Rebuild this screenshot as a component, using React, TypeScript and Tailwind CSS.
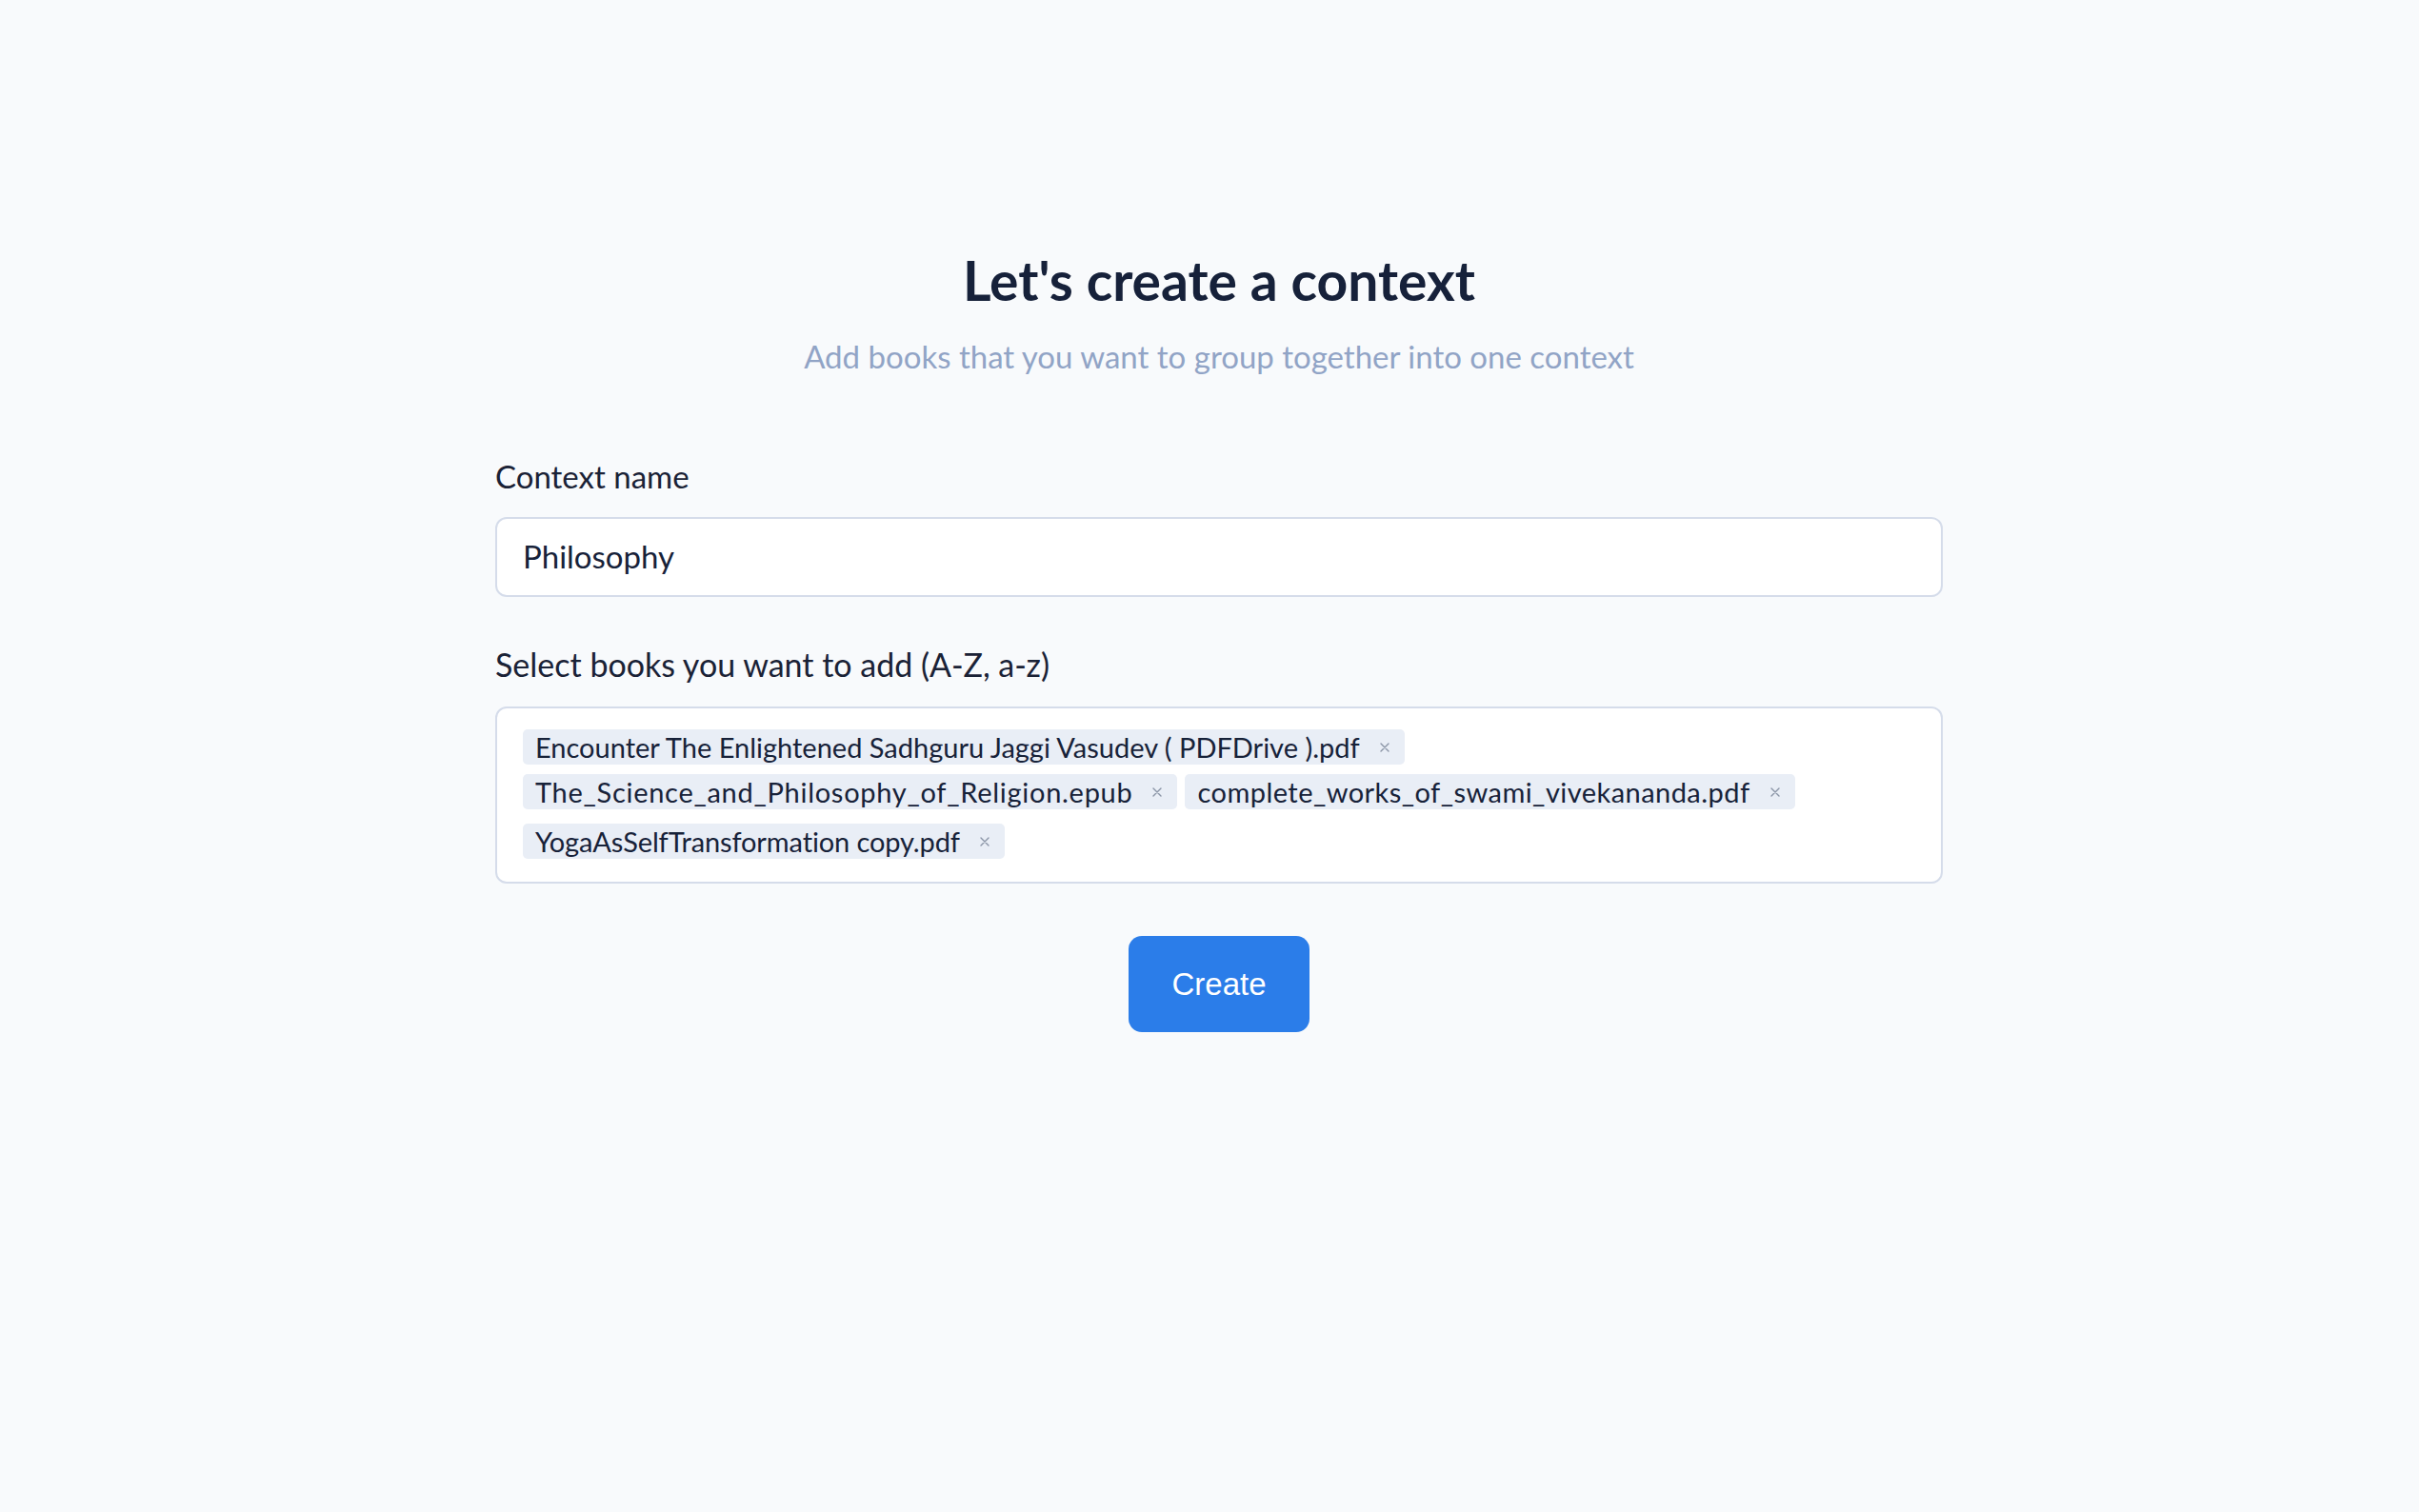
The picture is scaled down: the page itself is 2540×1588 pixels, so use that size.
import React from "react";

const tags = [
  { t: "Encounter The Enlightened Sadhguru Jaggi Vasudev ( PDFDrive ).pdf", c: "tracking-[0px]" },
  { t: "The_Science_and_Philosophy_of_Religion.epub", c: "tracking-[0.72px]" },
  { t: "complete_works_of_swami_vivekananda.pdf", c: "tracking-[0.45px]" },
  { t: "YogaAsSelfTransformation copy.pdf", c: "tracking-[-0.12px]" },
];

function XIcon() {
  return (
    <svg width="12" height="12" viewBox="0 0 12 12" fill="none">
      <path d="M2 2L10 10M10 2L2 10" stroke="#8b95a7" strokeWidth="1.4" strokeLinecap="round" />
    </svg>
  );
}

export default function App() {
  return (
    <div
      className="min-h-[1588px] w-full bg-[#f8fafc] text-[#172239] pl-[20px]"
      style={{ fontFamily: "Lato, 'Noto Sans', sans-serif" }}
    >
      <div className="mx-auto flex w-[1520px] flex-col pt-[260px]">
        <h1 className="text-center text-[57px] font-bold leading-[68px] text-[#16213a]">
          Let's create a context
        </h1>
        <p className="mt-[24px] text-center text-[33px] leading-[44px] text-[#91a4c6]">
          Add books that you want to group together into one context
        </p>

        <label className="mt-[84px] text-[33px] leading-[40px] text-[#1a2236]">Context name</label>
        <div className="mt-[23px] flex h-[84px] items-center rounded-[12px] border-2 border-[#d5dcea] bg-white px-[27px]">
          <span className="text-[33px] text-[#172239]">Philosophy</span>
        </div>

        <label className="mt-[51px] text-[34px] leading-[40px] text-[#1a2236]">
          Select books you want to add (A-Z, a-z)
        </label>
        <div className="mt-[24px] h-[186px] rounded-[12px] border-2 border-[#d5dcea] bg-white pl-[27px] pr-[27px] pt-[22px]">
          <div className="flex flex-wrap items-center gap-x-[8px] gap-y-[10px]">
            {tags.map((t) => (
              <div key={t.t} className="flex h-[37px] items-center rounded-[5px] bg-[#e9eef6]">
                <span className={`pl-[13px] pr-[20px] text-[29px] leading-[37px] text-[#172239] ${t.c}`}>{t.t}</span>
                <span className="flex items-center pr-[15px]">
                  <XIcon />
                </span>
              </div>
            ))}
            <div className="h-[47px] w-[4px]" />
          </div>
        </div>

        <div className="mt-[55px] flex justify-center">
          <button
            className="h-[101px] rounded-[14px] bg-[#2b7de9] px-[45px] text-[33px] font-medium text-white"
            style={{ fontFamily: "'Liberation Sans', Arial, sans-serif" }}
          >
            Create
          </button>
        </div>
      </div>
    </div>
  );
}
